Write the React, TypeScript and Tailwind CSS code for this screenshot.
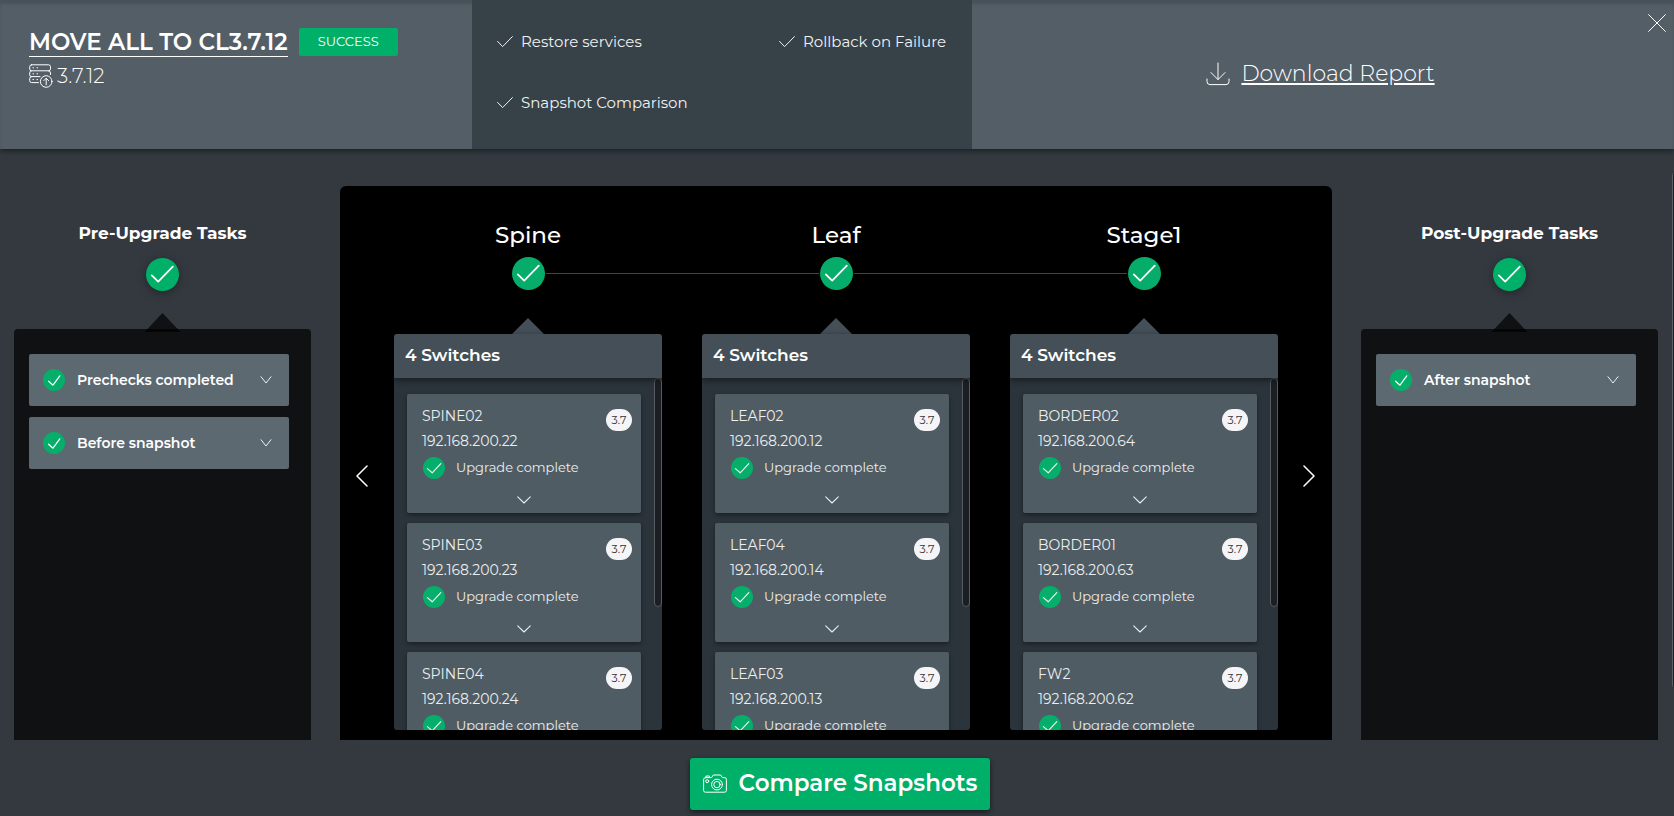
import React from "react";

type Switch = { name: string; ip: string };
type Stage = { title: string; switches: Switch[] };

const stages: Stage[] = [
  {
    title: "Spine",
    switches: [
      { name: "SPINE02", ip: "192.168.200.22" },
      { name: "SPINE03", ip: "192.168.200.23" },
      { name: "SPINE04", ip: "192.168.200.24" },
    ],
  },
  {
    title: "Leaf",
    switches: [
      { name: "LEAF02", ip: "192.168.200.12" },
      { name: "LEAF04", ip: "192.168.200.14" },
      { name: "LEAF03", ip: "192.168.200.13" },
    ],
  },
  {
    title: "Stage1",
    switches: [
      { name: "BORDER02", ip: "192.168.200.64" },
      { name: "BORDER01", ip: "192.168.200.63" },
      { name: "FW2", ip: "192.168.200.62" },
    ],
  },
];

const iconProps = {
  fill: "none",
  stroke: "currentColor",
  strokeLinecap: "round" as const,
  strokeLinejoin: "round" as const,
  "aria-hidden": true,
};

function StageCheck({ shadow = false }: { shadow?: boolean }) {
  return (
    <span
      className={
        shadow
          ? "flex size-[33px] shrink-0 rounded-full bg-[#00b069] shadow-[0_2px_10px_rgba(0,0,0,0.35)]"
          : "flex size-[33px] shrink-0 rounded-full bg-[#06ad6a]"
      }
    >
      <svg viewBox="0 0 33 33" className="size-full" strokeWidth="1.8" {...iconProps}>
        <path d="M5.8 17.4 L12.2 23.6 L26.8 8.6" />
      </svg>
    </span>
  );
}

function SmallCheck({ steep = false }: { steep?: boolean }) {
  return (
    <span className="flex size-[22px] shrink-0 rounded-full bg-[#05ae6a]">
      <svg viewBox="0 0 22 22" className="size-full" strokeWidth="1.2" {...iconProps}>
        <path d={steep ? "M5.6 12.2 L10 16.2 L16.8 6.8" : "M4.4 11.6 L9.2 15.8 L17.8 6.6"} />
      </svg>
    </span>
  );
}

function Feature({ label }: { label: string }) {
  return (
    <li className="flex items-center gap-2">
      <svg viewBox="0 0 16 12" className="h-3 w-4 shrink-0" strokeWidth="1" {...iconProps}>
        <path d="M0.6 5.4 L5.6 10.6 L15.4 0.6" />
      </svg>
      <span>{label}</span>
    </li>
  );
}

function TaskColumn({ title, tasks }: { title: string; tasks: string[] }) {
  return (
    <section className="flex w-[297px] shrink-0 flex-col pt-[33px]">
      <div className="flex flex-col items-center">
        <h2 className="text-[17px] leading-7 font-bold">{title}</h2>
        <div className="mt-[11px]">
          <StageCheck shadow />
        </div>
        <div className="mt-[22px] -mb-[3px] h-[19px] w-9 bg-black/70 [clip-path:polygon(50%_0,100%_100%,0_100%)]" />
      </div>
      <div className="flex min-h-0 flex-1 flex-col gap-[11px] rounded-t-[4px] bg-[#0f1112] pt-[25px] pr-[22px] pl-[15px]">
        {tasks.map((task) => (
          <button
            key={task}
            type="button"
            className="flex h-[52px] shrink-0 items-center rounded-[2px] bg-[#5d6971] pr-[17px] pl-[14px] text-left"
          >
            <SmallCheck steep />
            <span className="ml-3 flex-1 text-[14px] font-semibold">{task}</span>
            <svg viewBox="0 0 12 8" className="h-2 w-3" strokeWidth="0.9" {...iconProps}>
              <path d="M1 0.7 L6 7 L11 0.7" />
            </svg>
          </button>
        ))}
      </div>
    </section>
  );
}

function SwitchCard({ name, ip }: Switch) {
  return (
    <article className="relative flex shrink-0 flex-col rounded-[2px] bg-[#4f5c64] pt-2.5 pl-[15px] text-[#eceeef] shadow-[0_2px_4px_rgba(0,0,0,0.4)]">
      <h4 className="text-[14px] leading-6">{name}</h4>
      <p className="mt-px text-[14px] leading-6">{ip}</p>
      <span className="absolute top-[15px] right-[9px] flex h-[22px] w-[26px] items-center justify-center rounded-full bg-[#f5f5f8] text-[11px] text-[#333]">
        3.7
      </span>
      <div className="mt-1 ml-px flex h-[22px] items-center gap-[11px] text-[13px]">
        <SmallCheck />
        <span>Upgrade complete</span>
      </div>
      <button
        type="button"
        aria-label={`Show details of ${name}`}
        className="mr-[15px] flex h-[34px] items-center justify-center pt-2"
      >
        <svg viewBox="0 0 14 8" className="h-2 w-3.5" strokeWidth="1.1" {...iconProps}>
          <path d="M0.7 0.8 L7 7 L13.3 0.8" />
        </svg>
      </button>
    </article>
  );
}

function StageColumn({ stage, first, last }: { stage: Stage; first: boolean; last: boolean }) {
  return (
    <section className="flex min-w-0 flex-1 flex-col">
      <h3 className="text-center text-[23px] leading-7 font-medium">{stage.title}</h3>
      <div className="-mx-5 mt-2 flex items-center gap-px">
        <div className={first ? "h-px flex-1" : "h-px flex-1 bg-[#3b464e]"} />
        <StageCheck />
        <div className={last ? "h-px flex-1" : "h-px flex-1 bg-[#3b464e]"} />
      </div>
      <div className="mt-7 h-4 w-8 self-center bg-[#454f58] [clip-path:polygon(50%_0,100%_100%,0_100%)]" />
      <div className="z-10 flex h-11 shrink-0 items-center rounded-t-[3px] bg-[#454f58] px-[11px] text-[17px] font-semibold shadow-[0_2px_6px_rgba(0,0,0,0.5)]">
        4 Switches
      </div>
      <div className="relative flex min-h-0 flex-1 flex-col overflow-hidden rounded-b-[3px] bg-[#2b343b]">
        <div className="flex flex-col gap-2.5 pt-4 pr-[21px] pl-[13px]">
          {stage.switches.map((item) => (
            <SwitchCard key={item.name} {...item} />
          ))}
        </div>
        <div className="absolute top-0 right-0 h-[65%] w-2 rounded-full border border-[#555b5f] bg-[#1b1f23]" />
      </div>
    </section>
  );
}

export default function App() {
  return (
    <div className="flex h-screen min-w-[1280px] flex-col overflow-hidden bg-[#33393f] font-['Montserrat','Inter','Liberation_Sans',sans-serif] text-white">
      <header className="relative z-10 grid h-[149px] shrink-0 grid-cols-[472fr_500px_702fr] bg-[#545e66] shadow-[0_2px_5px_rgba(0,0,0,0.45),inset_0_4px_3px_rgba(62,72,82,0.55)]">
        <div className="flex flex-col items-start pt-7 pl-[29px]">
          <div className="flex items-start gap-[11px]">
            <h1 className="border-b border-white text-[23px] leading-7 font-semibold whitespace-nowrap">
              MOVE ALL TO CL3.7.12
            </h1>
            <span className="flex h-7 w-[99px] items-center justify-center rounded-[2px] bg-[#00b069] text-[13px]">
              SUCCESS
            </span>
          </div>
          <div className="mt-[5px] flex items-center gap-1 text-[20px] leading-7 font-light">
            <svg viewBox="0 0 24 24" className="size-6" strokeWidth="1" {...iconProps}>
              <path d="M2.5 0.8 H19.5 Q21.5 0.8 21.5 2.8 V4.8 Q21.5 6.8 19.5 6.8 H2.5 Q0.7 6.8 0.7 4.8 V2.8 Q0.7 0.8 2.5 0.8 Z" />
              <path d="M2.5 6.8 Q0.7 6.8 0.7 8.8 V10.8 Q0.7 12.6 2.5 12.6 H11 M19.5 6.8 Q21.5 6.8 21.5 9 V10.5" />
              <path d="M2.5 12.6 Q0.7 12.6 0.7 14.6 V16.6 Q0.7 18.6 2.5 18.6 H9.5" />
              <path d="M4 3.8 H4.6 M8 3.8 H8.6 M4 9.8 H4.6 M8 9.8 H8.6 M4 15.6 H4.6 M8 15.6 H8.6" />
              <circle cx="17.2" cy="17.5" r="5.8" />
              <path d="M17.2 20.8 V14.4 M14.8 16.6 L17.2 14.2 L19.6 16.6" />
            </svg>
            <span>3.7.12</span>
          </div>
        </div>
        <ul className="grid grid-cols-[282px_1fr] content-start gap-y-[37px] bg-[#364148] pt-[30px] pl-[25px] text-[15px] leading-6 text-[#f0f2f3]">
          <Feature label="Restore services" />
          <Feature label="Rollback on Failure" />
          <Feature label="Snapshot Comparison" />
        </ul>
        <div className="flex">
          <div className="flex flex-1 items-center justify-center pb-0.5 pl-[21px]">
            <a href="#report" className="flex items-center gap-[11px] text-[22px] font-light">
              <svg viewBox="0 0 24 24" className="size-6" strokeWidth="1" {...iconProps}>
                <path d="M12 1 V17.5 M5 10.6 L12 17.6 L19 10.6" />
                <path d="M1 17 V19.5 Q1 22.6 4 22.6 H20 Q23 22.6 23 19.5 V17" />
              </svg>
              <span className="underline">Download Report</span>
            </a>
          </div>
          <button type="button" aria-label="Close" className="mt-3.5 mr-2 size-[18px]">
            <svg viewBox="0 0 18 18" className="size-full" strokeWidth="1" {...iconProps}>
              <path d="M0.6 0.6 L17.4 17.4 M17.4 0.6 L0.6 17.4" />
            </svg>
          </button>
        </div>
      </header>

      <main className="relative flex min-h-0 flex-1 gap-[29px] pt-[37px] pr-4 pl-3.5">
        <TaskColumn title="Pre-Upgrade Tasks" tasks={["Prechecks completed", "Before snapshot"]} />
        <div className="flex min-w-0 flex-1 rounded-t-md bg-black pt-[35px] pb-2.5">
          <button
            type="button"
            aria-label="Previous stages"
            className="flex w-[54px] shrink-0 items-center justify-center pr-2.5"
          >
            <svg viewBox="0 0 12 22" className="h-[22px] w-3" strokeWidth="1.5" {...iconProps}>
              <path d="M11 1 L1 11 L11 21" />
            </svg>
          </button>
          <div className="flex min-w-0 flex-1 gap-10">
            {stages.map((stage, i) => (
              <StageColumn
                key={stage.title}
                stage={stage}
                first={i === 0}
                last={i === stages.length - 1}
              />
            ))}
          </div>
          <button
            type="button"
            aria-label="Next stages"
            className="flex w-[54px] shrink-0 items-center justify-center pl-2"
          >
            <svg viewBox="0 0 12 22" className="h-[22px] w-3" strokeWidth="1.5" {...iconProps}>
              <path d="M1 1 L11 11 L1 21" />
            </svg>
          </button>
        </div>
        <TaskColumn title="Post-Upgrade Tasks" tasks={["After snapshot"]} />
        <div className="absolute top-6 right-0 h-[87%] w-0.5 rounded-l border-l border-[#5a6064] bg-[#1b1f23]" />
      </main>

      <footer className="flex shrink-0 justify-center pt-[18px] pb-1.5 pl-1.5">
        <button
          type="button"
          className="flex h-[52px] w-[300px] items-center justify-center gap-3 rounded-[3px] bg-[#00b069] pb-0.5 text-[23px] font-semibold whitespace-nowrap shadow-[0_2px_5px_rgba(0,0,0,0.5)]"
        >
          <svg viewBox="0 0 24 19" className="h-[19px] w-6 shrink-0" strokeWidth="1" {...iconProps}>
            <path d="M2.6 3.6 H6.5 L8.5 3.6 L10.3 1 H17.6 L19.4 3.6 H21.6 Q23.4 3.6 23.4 5.4 V16.4 Q23.4 18.2 21.6 18.2 H2.4 Q0.6 18.2 0.6 16.4 V5.4 Q0.6 3.6 2.6 3.6 Z" />
            <path d="M3 3.4 V2 H6.4 V3.4" />
            <circle cx="14" cy="10.6" r="5.4" />
            <circle cx="14" cy="10.6" r="3.2" />
            <circle cx="4.2" cy="7.2" r="1.5" />
          </svg>
          Compare Snapshots
        </button>
      </footer>
    </div>
  );
}
